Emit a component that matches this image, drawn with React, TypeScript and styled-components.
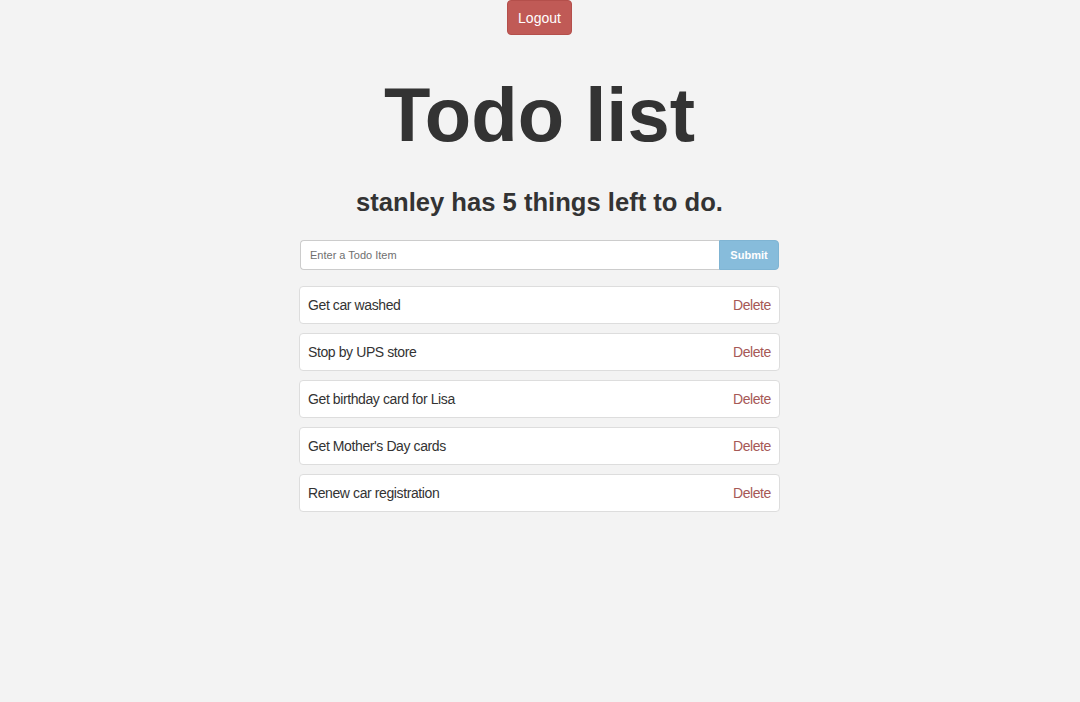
import React, { useState } from "react";
import styled, { createGlobalStyle } from "styled-components";

const GlobalStyle = createGlobalStyle`
    body {
        margin: 0;
        background: #f3f3f3;
        font-family: "Liberation Sans", Arial, sans-serif;
        color: #333;
    }
`;

export const Page = styled.div`
    min-height: 702px;
    padding-right: 1px;
    display: flex;
    flex-direction: column;
    align-items: center;
`;

export const LogoutButton = styled.button`
    width: 65px;
    height: 35px;
    border: 1px solid #b44f4b;
    border-radius: 4px;
    background: #c05a56;
    color: #fff;
    font-family: inherit;
    font-size: 14px;
    padding: 0;
    cursor: pointer;
`;

export const Title = styled.h1`
    margin: 35px 0 0;
    font-size: 76px;
    line-height: 90px;
    font-weight: bold;
    color: #333;
`;

export const Subtitle = styled.h2`
    margin: 27px 0 0;
    font-size: 25.6px;
    line-height: 30px;
    font-weight: bold;
    color: #333;
`;

export const Wrapper = styled.div`
    width: 481px;
    margin-top: 23px;
`;

export const FormStyle = styled.form`
    display: flex;
    width: 479px;
    margin-left: 1px;
    height: 30px;
`;

export const InputStyle = styled.input`
    flex: 1;
    min-width: 0;
    box-sizing: border-box;
    height: 30px;
    border: 1px solid #ccc;
    border-right: none;
    border-radius: 4px 0 0 4px;
    padding: 0 9px;
    font-family: inherit;
    font-size: 11px;
    color: #555;
    background: #fff;
    outline: none;
    &::placeholder {
        color: #6f6f6f;
    }
`;

export const SubmitButton = styled.button`
    width: 60px;
    height: 30px;
    box-sizing: border-box;
    border: 1px solid #7fb4d3;
    border-radius: 0 4px 4px 0;
    background: #87bcdb;
    color: #fff;
    font-family: inherit;
    font-size: 11px;
    font-weight: bold;
    padding: 0;
`;

export const List = styled.ul`
    list-style: none;
    margin: 16px 0 0;
    padding: 0;
    display: flex;
    flex-direction: column;
    gap: 9px;
`;

export const Item = styled.li`
    height: 38px;
    box-sizing: border-box;
    border: 1px solid #ddd;
    border-radius: 4px;
    background: #fff;
    display: flex;
    align-items: center;
    justify-content: space-between;
    padding: 0 8px;
    font-size: 14px;
    letter-spacing: -0.4px;
    color: #333;
`;

export const DeleteLink = styled.a`
    color: #a65856;
    cursor: pointer;
    font-size: 14px;
`;

const TODOS = [
    "Get car washed",
    "Stop by UPS store",
    "Get birthday card for Lisa",
    "Get Mother's Day cards",
    "Renew car registration",
];

export default function App() {
    const [todos] = useState(TODOS);
    return (
        <>
            <GlobalStyle />
            <Page>
                <LogoutButton>Logout</LogoutButton>
                <Title>Todo list</Title>
                <Subtitle>stanley has {todos.length} things left to do.</Subtitle>
                <Wrapper>
                    <FormStyle onSubmit={(e) => e.preventDefault()}>
                        <InputStyle placeholder="Enter a Todo Item" />
                        <SubmitButton type="submit">Submit</SubmitButton>
                    </FormStyle>
                    <List>
                        {todos.map((todo) => (
                            <Item key={todo}>
                                <span>{todo}</span>
                                <DeleteLink>Delete</DeleteLink>
                            </Item>
                        ))}
                    </List>
                </Wrapper>
            </Page>
        </>
    );
}
